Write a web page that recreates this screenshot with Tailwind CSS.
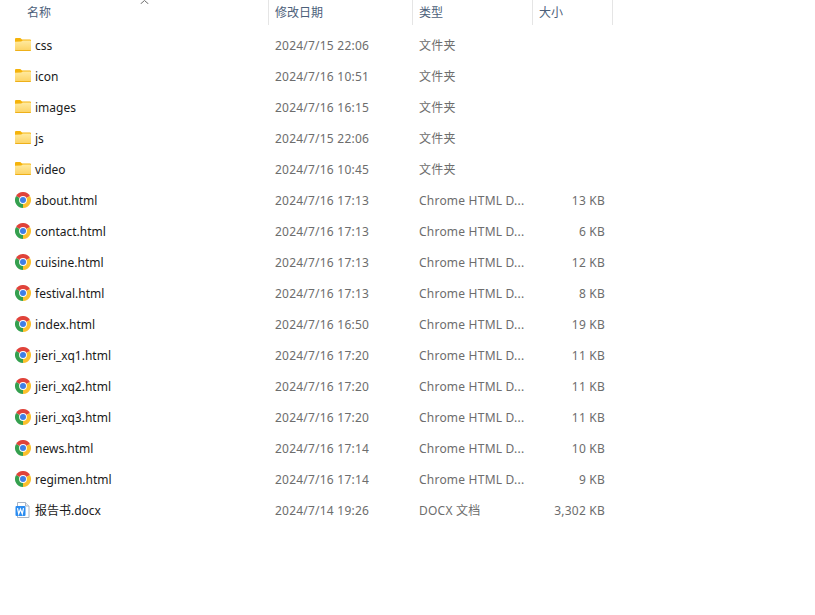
<!DOCTYPE html>
<html lang="zh-CN">
<head>
  <meta charset="UTF-8" />
  <title>文件列表</title>
  <script src="https://cdn.jsdelivr.net/npm/@tailwindcss/browser@4"></script>
</head>
<body class="bg-white h-[615px] overflow-hidden font-['Noto_Sans','Noto_Sans_CJK_SC',sans-serif] text-[12px] leading-[16px]">
  <svg class="absolute w-0 h-0">
    <defs>
      <linearGradient id="folderFront" x1="0" y1="0" x2="0" y2="1">
        <stop offset="0" stop-color="#ffeaa0"/>
        <stop offset="1" stop-color="#fcd261"/>
      </linearGradient>
      <symbol id="folder" viewBox="0 0 16 16">
        <path d="M0 2A1 1 0 0 1 1 1h4.300l1.700 1.500h8a1 1 0 0 1 1 1V6H0z" fill="#f5b30a"/>
        <path d="M0 4.700l6.200-.2 1.600-1H15a1 1 0 0 1 1 1V13a1 1 0 0 1-1 1H1a1 1 0 0 1-1-1z" fill="url(#folderFront)"/>
        <path d="M0 13h16a1 1 0 0 1-1 1H1a1 1 0 0 1-1-1z" fill="#eeb019"/>
      </symbol>
      <symbol id="chrome" viewBox="0 0 16 16">
        <path d="M8 8 1.070 4A8 8 0 0 1 14.930 4z" fill="#e0433a"/>
        <path d="M8 8 14.930 4A8 8 0 0 1 8 16z" fill="#fbc02d"/>
        <path d="M8 8 8 16A8 8 0 0 1 1.070 4z" fill="#35a04f"/>
        <circle cx="8" cy="8" r="3.900" fill="#fff"/>
        <circle cx="8" cy="8" r="3" fill="#3f7fe6"/>
      </symbol>
      <symbol id="word" viewBox="0 0 16 16">
        <path d="M2.500 .5h8l3.500 3.500v11.500h-11.500z" fill="#fff" stroke="#a9b4c4"/>
        <path d="M10.500 .5v3.500h3.500" fill="#e8edf3" stroke="#a9b4c4"/>
        <rect x="0.500" y="4" width="10" height="10" rx="1" fill="#2b8cf0"/>
        <path d="M2.500 6.200l1.200 5.600 1.800-4.600 1.800 4.600 1.200-5.600" fill="none" stroke="#fff" stroke-width="1.200"/>
      </symbol>
    </defs>
  </svg>

  <div class="relative w-[613px]">
    <!-- column headers -->
    <div class="grid grid-cols-[269px_144px_120px_80px] h-[25px] text-[#4c607a]">
      <div class="pl-[27px] pt-[5px] border-r border-[#e5e5e5]">名称</div>
      <div class="pl-[6px] pt-[5px] border-r border-[#e5e5e5]">修改日期</div>
      <div class="pl-[6px] pt-[5px] border-r border-[#e5e5e5]">类型</div>
      <div class="pl-[6px] pt-[5px] border-r border-[#e5e5e5]">大小</div>
    </div>
    <svg class="absolute left-[140px] top-0 w-[9px] h-[4px]" viewBox="0 0 9 4" fill="none" stroke="#6d6d6d"><path d="M.5 4 4.500 .5 8.500 4"/></svg>

    <!-- file rows -->
    <div class="pt-[5px] text-[#6d6d6d] tracking-[0.22px]">
      <div class="grid grid-cols-[269px_144px_120px_80px] h-[31px] items-center">
        <div class="pl-[15px] flex items-center gap-[4px] text-[#1a1a1a] tracking-normal"><svg class="w-[16px] h-[16px] -mt-[1px]"><use href="#folder"/></svg>css</div>
        <div class="pl-[6px]">2024/7/15 22:06</div><div class="pl-[6px]">文件夹</div><div></div>
      </div>
      <div class="grid grid-cols-[269px_144px_120px_80px] h-[31px] items-center">
        <div class="pl-[15px] flex items-center gap-[4px] text-[#1a1a1a] tracking-normal"><svg class="w-[16px] h-[16px] -mt-[1px]"><use href="#folder"/></svg>icon</div>
        <div class="pl-[6px]">2024/7/16 10:51</div><div class="pl-[6px]">文件夹</div><div></div>
      </div>
      <div class="grid grid-cols-[269px_144px_120px_80px] h-[31px] items-center">
        <div class="pl-[15px] flex items-center gap-[4px] text-[#1a1a1a] tracking-normal"><svg class="w-[16px] h-[16px] -mt-[1px]"><use href="#folder"/></svg>images</div>
        <div class="pl-[6px]">2024/7/16 16:15</div><div class="pl-[6px]">文件夹</div><div></div>
      </div>
      <div class="grid grid-cols-[269px_144px_120px_80px] h-[31px] items-center">
        <div class="pl-[15px] flex items-center gap-[4px] text-[#1a1a1a] tracking-normal"><svg class="w-[16px] h-[16px] -mt-[1px]"><use href="#folder"/></svg>js</div>
        <div class="pl-[6px]">2024/7/15 22:06</div><div class="pl-[6px]">文件夹</div><div></div>
      </div>
      <div class="grid grid-cols-[269px_144px_120px_80px] h-[31px] items-center">
        <div class="pl-[15px] flex items-center gap-[4px] text-[#1a1a1a] tracking-normal"><svg class="w-[16px] h-[16px] -mt-[1px]"><use href="#folder"/></svg>video</div>
        <div class="pl-[6px]">2024/7/16 10:45</div><div class="pl-[6px]">文件夹</div><div></div>
      </div>
      <div class="grid grid-cols-[269px_144px_120px_80px] h-[31px] items-center">
        <div class="pl-[15px] flex items-center gap-[4px] text-[#1a1a1a] tracking-normal"><svg class="w-[16px] h-[16px] -mt-[1px]"><use href="#chrome"/></svg>about.html</div>
        <div class="pl-[6px]">2024/7/16 17:13</div><div class="pl-[6px]">Chrome HTML D...</div><div class="pr-[8px] text-right">13 KB</div>
      </div>
      <div class="grid grid-cols-[269px_144px_120px_80px] h-[31px] items-center">
        <div class="pl-[15px] flex items-center gap-[4px] text-[#1a1a1a] tracking-normal"><svg class="w-[16px] h-[16px] -mt-[1px]"><use href="#chrome"/></svg>contact.html</div>
        <div class="pl-[6px]">2024/7/16 17:13</div><div class="pl-[6px]">Chrome HTML D...</div><div class="pr-[8px] text-right">6 KB</div>
      </div>
      <div class="grid grid-cols-[269px_144px_120px_80px] h-[31px] items-center">
        <div class="pl-[15px] flex items-center gap-[4px] text-[#1a1a1a] tracking-normal"><svg class="w-[16px] h-[16px] -mt-[1px]"><use href="#chrome"/></svg>cuisine.html</div>
        <div class="pl-[6px]">2024/7/16 17:13</div><div class="pl-[6px]">Chrome HTML D...</div><div class="pr-[8px] text-right">12 KB</div>
      </div>
      <div class="grid grid-cols-[269px_144px_120px_80px] h-[31px] items-center">
        <div class="pl-[15px] flex items-center gap-[4px] text-[#1a1a1a] tracking-normal"><svg class="w-[16px] h-[16px] -mt-[1px]"><use href="#chrome"/></svg>festival.html</div>
        <div class="pl-[6px]">2024/7/16 17:13</div><div class="pl-[6px]">Chrome HTML D...</div><div class="pr-[8px] text-right">8 KB</div>
      </div>
      <div class="grid grid-cols-[269px_144px_120px_80px] h-[31px] items-center">
        <div class="pl-[15px] flex items-center gap-[4px] text-[#1a1a1a] tracking-normal"><svg class="w-[16px] h-[16px] -mt-[1px]"><use href="#chrome"/></svg>index.html</div>
        <div class="pl-[6px]">2024/7/16 16:50</div><div class="pl-[6px]">Chrome HTML D...</div><div class="pr-[8px] text-right">19 KB</div>
      </div>
      <div class="grid grid-cols-[269px_144px_120px_80px] h-[31px] items-center">
        <div class="pl-[15px] flex items-center gap-[4px] text-[#1a1a1a] tracking-normal"><svg class="w-[16px] h-[16px] -mt-[1px]"><use href="#chrome"/></svg>jieri_xq1.html</div>
        <div class="pl-[6px]">2024/7/16 17:20</div><div class="pl-[6px]">Chrome HTML D...</div><div class="pr-[8px] text-right">11 KB</div>
      </div>
      <div class="grid grid-cols-[269px_144px_120px_80px] h-[31px] items-center">
        <div class="pl-[15px] flex items-center gap-[4px] text-[#1a1a1a] tracking-normal"><svg class="w-[16px] h-[16px] -mt-[1px]"><use href="#chrome"/></svg>jieri_xq2.html</div>
        <div class="pl-[6px]">2024/7/16 17:20</div><div class="pl-[6px]">Chrome HTML D...</div><div class="pr-[8px] text-right">11 KB</div>
      </div>
      <div class="grid grid-cols-[269px_144px_120px_80px] h-[31px] items-center">
        <div class="pl-[15px] flex items-center gap-[4px] text-[#1a1a1a] tracking-normal"><svg class="w-[16px] h-[16px] -mt-[1px]"><use href="#chrome"/></svg>jieri_xq3.html</div>
        <div class="pl-[6px]">2024/7/16 17:20</div><div class="pl-[6px]">Chrome HTML D...</div><div class="pr-[8px] text-right">11 KB</div>
      </div>
      <div class="grid grid-cols-[269px_144px_120px_80px] h-[31px] items-center">
        <div class="pl-[15px] flex items-center gap-[4px] text-[#1a1a1a] tracking-normal"><svg class="w-[16px] h-[16px] -mt-[1px]"><use href="#chrome"/></svg>news.html</div>
        <div class="pl-[6px]">2024/7/16 17:14</div><div class="pl-[6px]">Chrome HTML D...</div><div class="pr-[8px] text-right">10 KB</div>
      </div>
      <div class="grid grid-cols-[269px_144px_120px_80px] h-[31px] items-center">
        <div class="pl-[15px] flex items-center gap-[4px] text-[#1a1a1a] tracking-normal"><svg class="w-[16px] h-[16px] -mt-[1px]"><use href="#chrome"/></svg>regimen.html</div>
        <div class="pl-[6px]">2024/7/16 17:14</div><div class="pl-[6px]">Chrome HTML D...</div><div class="pr-[8px] text-right">9 KB</div>
      </div>
      <div class="grid grid-cols-[269px_144px_120px_80px] h-[31px] items-center">
        <div class="pl-[15px] flex items-center gap-[4px] text-[#1a1a1a] tracking-normal"><svg class="w-[16px] h-[16px] -mt-[1px]"><use href="#word"/></svg>报告书.docx</div>
        <div class="pl-[6px]">2024/7/14 19:26</div><div class="pl-[6px]">DOCX 文档</div><div class="pr-[8px] text-right">3,302 KB</div>
      </div>
    </div>
  </div>
</body>
</html>
